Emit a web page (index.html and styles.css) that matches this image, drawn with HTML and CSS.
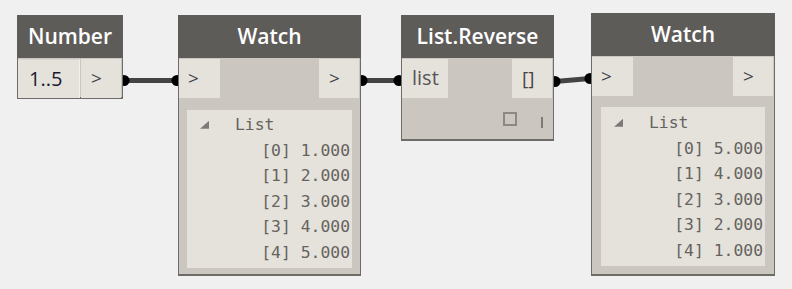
FILE: index.html
```html
<!DOCTYPE html>
<html lang="en">
<head>
    <meta charset="UTF-8">
    <meta name="viewport" content="width=device-width, initial-scale=1.0">
    <title>Dynamo - List.Reverse</title>
    <link rel="stylesheet" href="styles.css">
</head>
<body>

    <div id="canvas">
        <svg class="wires" width="792" height="289" viewBox="0 0 792 289">
            <line x1="124" y1="80.5" x2="177" y2="80.5" />
            <line x1="362" y1="80.5" x2="399" y2="80.5" />
            <line x1="555" y1="81.5" x2="590" y2="78.5" />
            <circle cx="124" cy="80.5" r="5.5" />
            <circle cx="177" cy="80.5" r="5.5" />
            <circle cx="362" cy="80.5" r="5.5" />
            <circle cx="399" cy="80.5" r="5.5" />
            <circle cx="555" cy="81.5" r="5.5" />
            <circle cx="590" cy="78.5" r="5.5" />
        </svg>

        <div class="node node-number">
            <div class="node-header">Number</div>
            <div class="node-ports">
                <div class="port port-value">1..5</div>
                <div class="port">&gt;</div>
            </div>
        </div>

        <div class="node node-watch1">
            <div class="node-header">Watch</div>
            <div class="node-ports">
                <div class="port">&gt;</div>
                <div class="port">&gt;</div>
            </div>
            <div class="watch-panel">
                <div class="watch-title"><span class="expander"></span>List</div>
                <div class="watch-item">[0] 1.000</div>
                <div class="watch-item">[1] 2.000</div>
                <div class="watch-item">[2] 3.000</div>
                <div class="watch-item">[3] 4.000</div>
                <div class="watch-item">[4] 5.000</div>
            </div>
        </div>

        <div class="node node-reverse">
            <div class="node-header">List.Reverse</div>
            <div class="node-ports">
                <div class="port port-in-wide">list</div>
                <div class="port port-out-list">[]</div>
            </div>
            <div class="node-footer">
                <span class="preview-box"></span>
                <span class="lacing"></span>
            </div>
        </div>

        <div class="node node-watch2">
            <div class="node-header">Watch</div>
            <div class="node-ports">
                <div class="port">&gt;</div>
                <div class="port">&gt;</div>
            </div>
            <div class="watch-panel">
                <div class="watch-title"><span class="expander"></span>List</div>
                <div class="watch-item">[0] 5.000</div>
                <div class="watch-item">[1] 4.000</div>
                <div class="watch-item">[2] 3.000</div>
                <div class="watch-item">[3] 2.000</div>
                <div class="watch-item">[4] 1.000</div>
            </div>
        </div>
    </div>

</body>
</html>
```

FILE: styles.css
```css
body {
    margin: 0;
    padding: 0;
    background-color: #f0f0f0;
    font-family: "Open Sans", "Noto Sans", sans-serif;
}

#canvas {
    position: relative;
    width: 792px;
    height: 289px;
    overflow: hidden;
}

.wires {
    position: absolute;
    left: 0;
    top: 0;
}

.wires line {
    stroke: #444;
    stroke-width: 5;
}

.wires circle {
    fill: #000;
}

/* nodes sit on a free canvas, so each one is placed by its coordinates */
.node {
    position: absolute;
    box-sizing: border-box;
    background-color: #cbc7c0;
    border: 1px solid #6e6c69;
    border-top: none;
    border-bottom-width: 2px;
}

.node-header {
    height: 43px;
    margin: 0 -1px;
    background-color: #5e5c59;
    color: #fff;
    font-size: 21px;
    font-weight: 600;
    line-height: 43px;
    text-align: center;
}

.node-ports {
    display: flex;
    justify-content: space-between;
    padding: 1px 1px 0 0;
}

.port {
    width: 40px;
    height: 39px;
    box-sizing: border-box;
    padding-left: 10px;
    background-color: #e5e2dc;
    color: #3d3d45;
    font-size: 19px;
    line-height: 38px;
}

.port-value {
    width: 62px;
    padding-left: 11px;
    border-right: 1px solid #f2f0ec;
    color: #1a1a2e;
    font-size: 20px;
    border-top: 1px solid #d8d5cf;
}

.port-in-wide {
    width: 46px;
    color: #555;
    font-size: 20px;
}

.port-out-list {
    color: #444;
}

.node-number {
    left: 17px;
    top: 15px;
    width: 106px;
    height: 84px;
}

.node-watch1 {
    left: 178px;
    top: 15px;
    width: 183px;
    height: 261px;
}

.node-watch2 {
    left: 591px;
    top: 13px;
    width: 184px;
    height: 263px;
}

.node-reverse {
    left: 401px;
    top: 15px;
    width: 153px;
    height: 126px;
}

.node-watch1 .port:first-child {
    width: 41px;
    padding-left: 9px;
}

.node-watch2 .port:first-child {
    width: 41px;
    padding-left: 9px;
}

.watch-panel {
    height: 158px;
    margin: 12px 8px 0 8px;
    padding-top: 2px;
    box-sizing: border-box;
    background-color: #e5e2dc;
    font-family: "DejaVu Sans Mono", "Liberation Mono", monospace;
    font-size: 16.4px;
    line-height: 25.6px;
    color: #66635f;
}

.node-watch2 .watch-panel {
    height: 159px;
    margin: 11px 9px 0 9px;
    padding-top: 3px;
}

.watch-title {
    display: flex;
    align-items: center;
    padding-left: 13px;
}

.expander {
    width: 9px;
    height: 8px;
    margin-right: 26px;
    background-color: #7c7a78;
    clip-path: polygon(0 100%, 100% 0, 100% 100%);
}

.watch-item {
    text-align: right;
    padding-right: 2px;
}

.node-footer {
    display: flex;
    justify-content: flex-end;
    align-items: center;
    height: 41px;
    padding-right: 10px;
}

.preview-box {
    width: 14px;
    height: 14px;
    box-sizing: border-box;
    border: 2px solid #8c8984;
    margin-right: 24px;
    margin-top: 1px;
}

.lacing {
    width: 2px;
    height: 11px;
    margin-top: 8px;
    background-color: #7d7a78;
}
```
